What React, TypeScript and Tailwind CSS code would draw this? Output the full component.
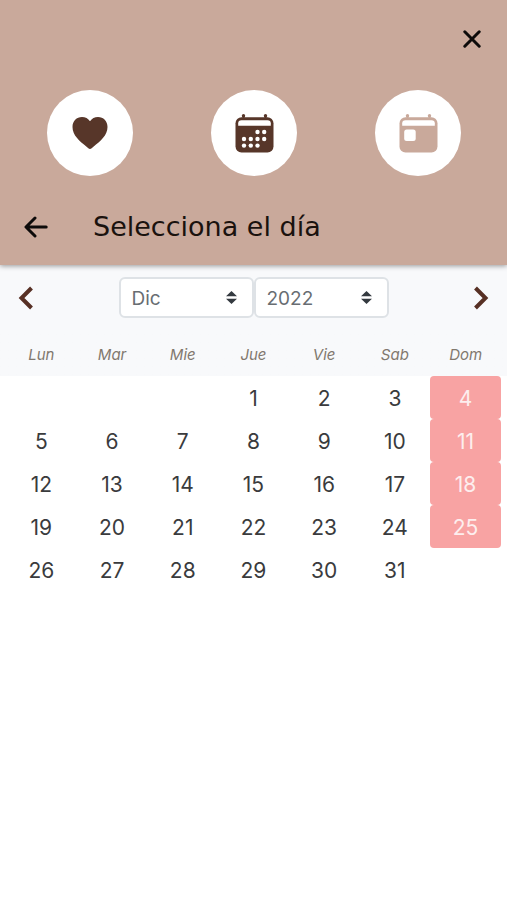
import { useState } from 'react';

const MONTHS = ['Ene', 'Feb', 'Mar', 'Abr', 'May', 'Jun', 'Jul', 'Ago', 'Sep', 'Oct', 'Nov', 'Dic'];
const YEARS = [2021, 2022, 2023, 2024];
const WEEKDAYS = ['Lun', 'Mar', 'Mie', 'Jue', 'Vie', 'Sab', 'Dom'];

// Weeks start on Monday, empty slots are null
function buildWeeks(year: number, month: number) {
  const offset = (new Date(year, month, 1).getDay() + 6) % 7;
  const total = new Date(year, month + 1, 0).getDate();
  const cells: (number | null)[] = Array(offset).fill(null);
  for (let day = 1; day <= total; day++) cells.push(day);
  while (cells.length % 7 !== 0) cells.push(null);

  const weeks: (number | null)[][] = [];
  for (let i = 0; i < cells.length; i += 7) weeks.push(cells.slice(i, i + 7));
  return weeks;
}

function HeartIcon() {
  return (
    <svg width="36" height="34" viewBox="0 0 36 34" fill="#573629" aria-hidden="true">
      <path d="M18 33C16.800 33 15.800 31.900 14.600 30.800C7.500 25 0.500 19.300 0.500 11C0.500 5 4.600 1 10 1C13.300 1 16.200 2.500 18 5.200C19.800 2.500 22.700 1 26 1C31.400 1 35.500 5 35.500 11C35.500 19.300 28.500 25 21.400 30.800C20.200 31.900 19.200 33 18 33Z" />
    </svg>
  );
}

function CalendarShell({ color, children }: { color: string; children: React.ReactNode }) {
  return (
    <svg width="39" height="39" viewBox="0 0 39 39" fill={color} aria-hidden="true">
      <circle cx="8.500" cy="1.800" r="1.700" />
      <circle cx="30.500" cy="1.800" r="1.700" />
      <path d="M7.500 2h2v3h-2zM29.500 2h2v3h-2z" />
      <rect x="0.500" y="3.200" width="38" height="35.300" rx="6" />
      <path d="M6.500 6.300H32.500Q35.800 6.300 35.800 9.300V11.800H3.200V9.300Q3.200 6.300 6.500 6.300Z" fill="#fff" />
      {children}
    </svg>
  );
}

const DOTS = [
  [22.5, 18], [29.2, 18],
  [9, 25], [15.8, 25], [22.5, 25], [29.2, 25],
  [9, 31.6], [15.8, 31.6], [22.5, 31.6],
];

function MonthIcon() {
  return (
    <CalendarShell color="#573629">
      {DOTS.map(([x, y]) => (
        <circle key={`${x}-${y}`} cx={x} cy={y} r="2.200" fill="#fff" />
      ))}
    </CalendarShell>
  );
}

function DayIcon() {
  return (
    <CalendarShell color="#c9a99b">
      <rect x="5.200" y="15.500" width="11.500" height="11.500" rx="2.500" fill="#fff" />
    </CalendarShell>
  );
}

function RoundButton({ label, children }: { label: string; children: React.ReactNode }) {
  return (
    <button
      aria-label={label}
      className="flex size-[86px] items-center justify-center rounded-full bg-white"
    >
      {children}
    </button>
  );
}

type PickerProps = {
  label: string;
  value: number;
  onChange: (value: number) => void;
  options: { value: number; text: string }[];
};

function Picker({ label, value, onChange, options }: PickerProps) {
  return (
    <div className="relative w-[135px]">
      <select
        aria-label={label}
        value={value}
        onChange={(e) => onChange(Number(e.target.value))}
        className="h-[41px] w-full appearance-none rounded-md border-2 border-[#dee2e6] bg-white px-[11px] pt-[3px] text-[19px] text-[#686d72]"
      >
        {options.map((o) => (
          <option key={o.value} value={o.value}>
            {o.text}
          </option>
        ))}
      </select>
      <svg
        className="pointer-events-none absolute top-[14px] right-[17px]"
        width="11"
        height="13"
        viewBox="0 0 11 13"
        fill="#343a40"
        aria-hidden="true"
      >
        <path d="M5.500 0L11 5.300H0ZM0 7.700H11L5.500 13Z" />
      </svg>
    </div>
  );
}

export default function App() {
  const [month, setMonth] = useState(11);
  const [year, setYear] = useState(2022);

  const shiftMonth = (step: number) => {
    const next = new Date(year, month + step, 1);
    setMonth(next.getMonth());
    setYear(next.getFullYear());
  };

  return (
    <div className="min-h-screen bg-white font-['Inter',sans-serif]">
      <header className="relative bg-[#c9a99b] pb-5 shadow-[0_1px_5px_rgba(0,0,0,0.4)]">
        <div className="flex justify-end px-[23px] pt-[27px]">
          <button aria-label="Cerrar" className="flex size-6 items-center justify-center">
            <svg width="18" height="18" viewBox="0 0 18 18" fill="none" stroke="#0d0b0a" strokeWidth="3" strokeLinecap="round">
              <path d="M1.800 1.800L16.200 16.200M16.200 1.800L1.800 16.200" />
            </svg>
          </button>
        </div>

        <nav className="mt-[39px] flex justify-between pr-[46px] pl-[47px]">
          <RoundButton label="Favoritos"><HeartIcon /></RoundButton>
          <RoundButton label="Mes"><MonthIcon /></RoundButton>
          <RoundButton label="Día"><DayIcon /></RoundButton>
        </nav>

        <div className="mt-[33px] flex items-center gap-[45px] px-6">
          <button aria-label="Volver" className="flex size-6 items-center justify-center">
            <svg width="24" height="22" viewBox="0 0 24 22" fill="none" stroke="#0d0b0a" strokeWidth="3" strokeLinecap="round" strokeLinejoin="round">
              <path d="M22.200 11H2.500M11 2L2 11L11 20" />
            </svg>
          </button>
          <h1 className="font-['DejaVu_Sans',sans-serif] text-[27px] leading-9 text-[#1a120e]">Selecciona el día</h1>
        </div>
      </header>

      <main>
        <div className="flex items-center justify-between bg-[#f8f9fb] px-4 pt-3 pb-4">
          <button aria-label="Mes anterior" onClick={() => shiftMonth(-1)} className="flex size-5 items-center justify-center">
            <svg width="16" height="24" viewBox="0 0 16 24" fill="none" stroke="#573024" strokeWidth="4">
              <path d="M13.500 2L3.500 12L13.500 22" />
            </svg>
          </button>
          <div className="flex">
            <Picker
              label="Mes"
              value={month}
              onChange={setMonth}
              options={MONTHS.map((text, value) => ({ value, text }))}
            />
            <Picker
              label="Año"
              value={year}
              onChange={setYear}
              options={YEARS.map((y) => ({ value: y, text: String(y) }))}
            />
          </div>
          <button aria-label="Mes siguiente" onClick={() => shiftMonth(1)} className="flex size-5 items-center justify-center">
            <svg width="16" height="24" viewBox="0 0 16 24" fill="none" stroke="#573024" strokeWidth="4">
              <path d="M2.500 2L12.500 12L2.500 22" />
            </svg>
          </button>
        </div>

        <div className="bg-linear-to-b from-[#f8f9fb] from-[42px] to-transparent to-[42px] px-[6px]">
          <table className="w-full table-fixed border-collapse text-center">
            <thead>
              <tr className="h-[42px]">
                {WEEKDAYS.map((name) => (
                  <th key={name} scope="col" className="p-0 text-[15px] font-normal text-[#81786e] italic">
                    {name}
                  </th>
                ))}
              </tr>
            </thead>
            <tbody>
              {buildWeeks(year, month).map((week, i) => (
                <tr key={i} className="h-[43px]">
                  {week.map((day, col) => (
                    <td
                      key={col}
                      className={
                        day && col === 6
                          ? 'rounded-[4px] bg-[#f8a3a3] p-0 pt-[3px] text-[21px] text-[#fdeeee]'
                          : 'p-0 pt-[3px] text-[21px] text-[#3a3b3d]'
                      }
                    >
                      {day}
                    </td>
                  ))}
                </tr>
              ))}
            </tbody>
          </table>
        </div>
      </main>
    </div>
  );
}
